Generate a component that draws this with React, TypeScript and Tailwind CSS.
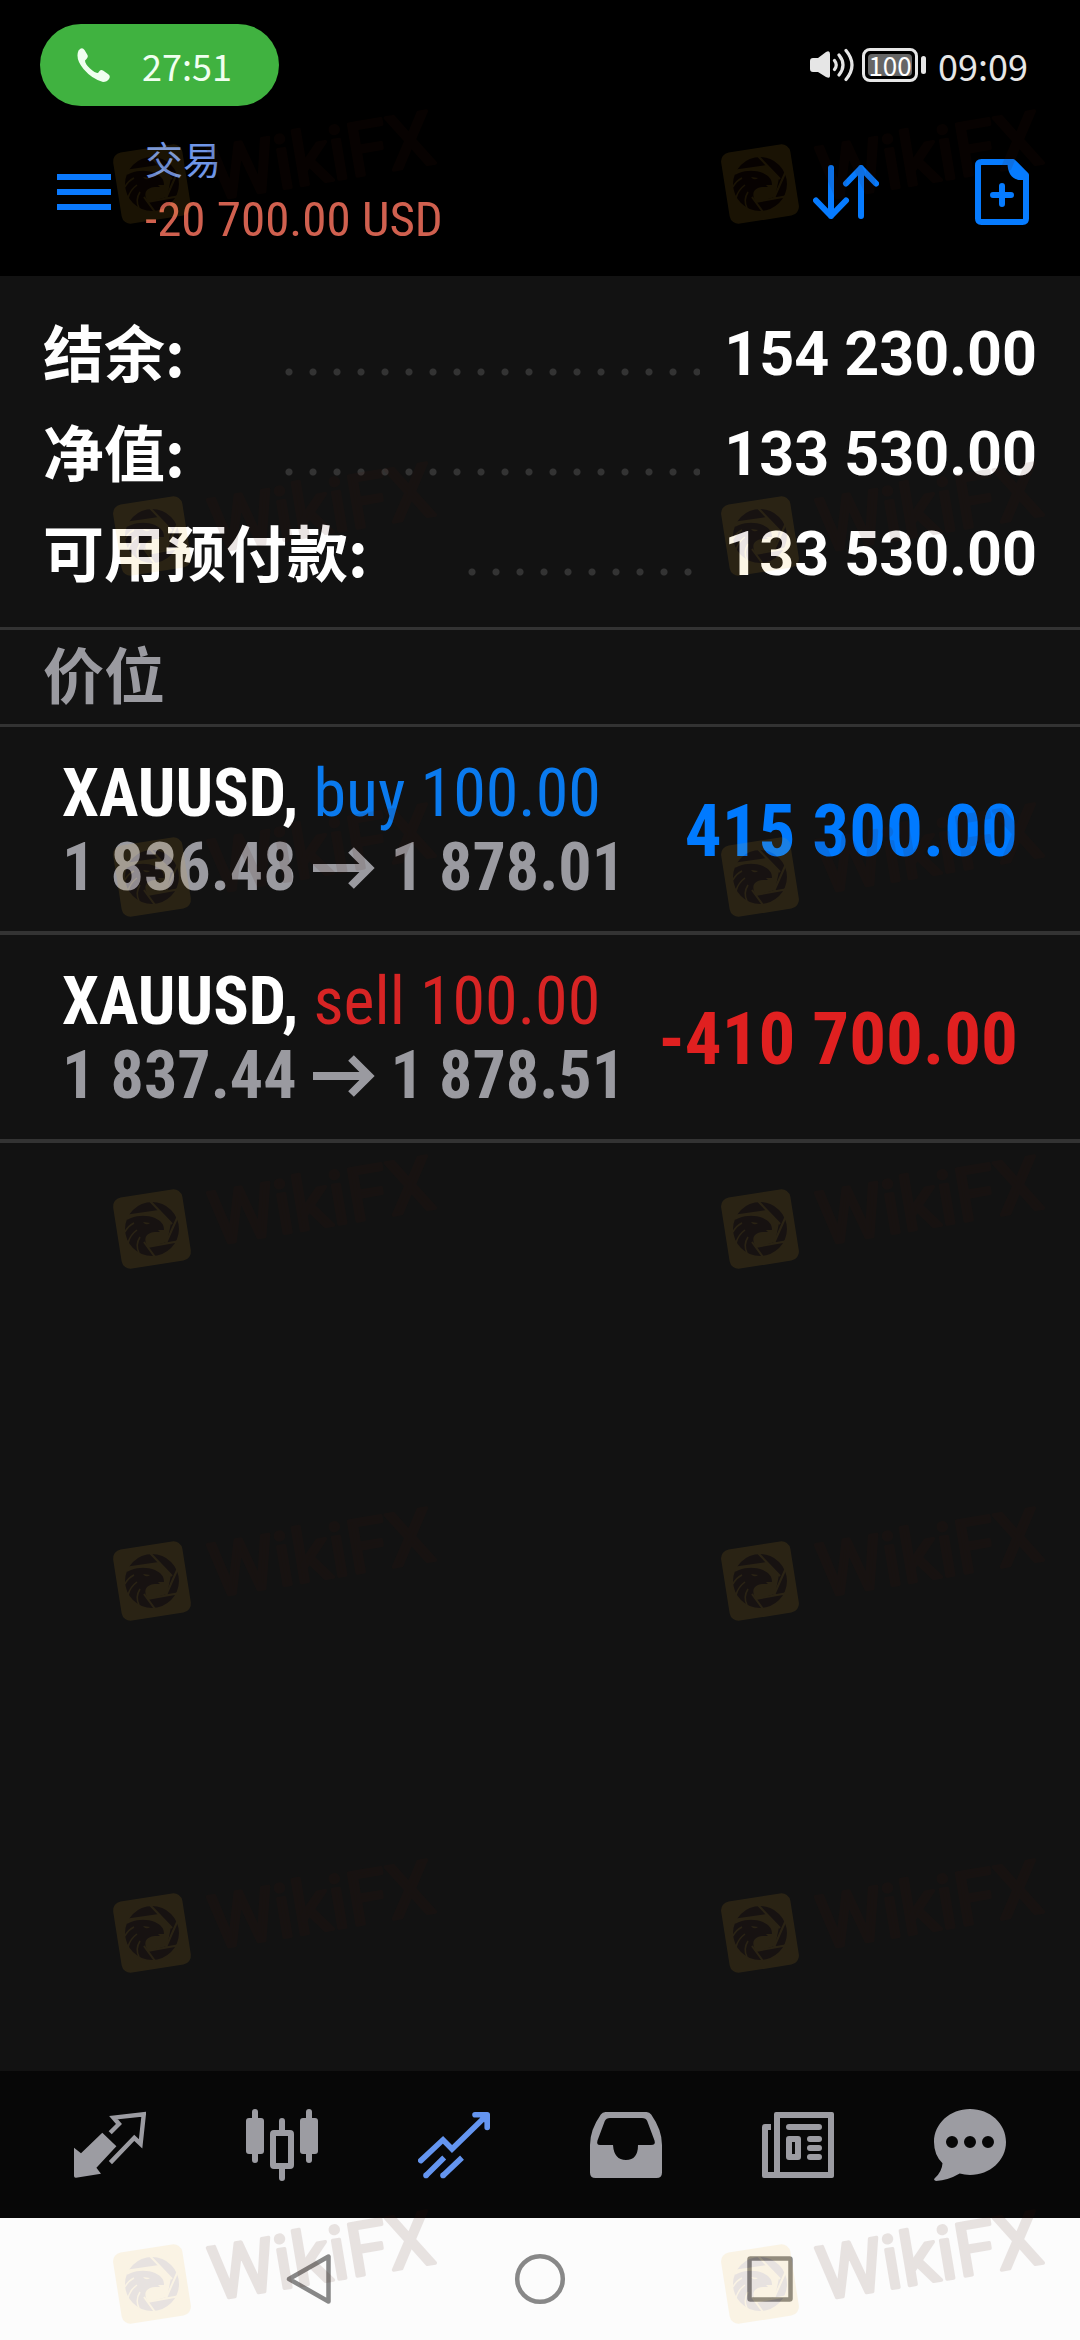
import { useState } from "react";
import clsx from "clsx";

type Position = {
  symbol: string;
  side: "buy" | "sell";
  volume: string;
  open: string;
  current: string;
  profit: string;
};

const summary = [
  { label: "结余:", value: "154 230.00" },
  { label: "净值:", value: "133 530.00" },
  { label: "可用预付款:", value: "133 530.00" },
];

const positions: Position[] = [
  { symbol: "XAUUSD", side: "buy", volume: "100.00", open: "1 836.48", current: "1 878.01", profit: "415 300.00" },
  { symbol: "XAUUSD", side: "sell", volume: "100.00", open: "1 837.44", current: "1 878.51", profit: "-410 700.00" },
];

const QuotesIcon = () => (
  <svg viewBox="0 0 72 72" className="size-[72px]" fill="currentColor">
    <path d="M0 38.7 7 44.3 28.3 23.7 42.4 37.2 22.4 58.7 27 64.7 2 68.8Q0 69 0 67Z" />
    <path d="M36.2 23.8 45 15 39.5 8.6 69.8 5.2 66.6 34.8 60.3 28.8 36.4 53.6" fill="none" stroke="currentColor" strokeWidth="4.4" />
  </svg>
);

const ChartIcon = () => (
  <svg viewBox="0 0 72 72" className="size-[72px]" fill="currentColor">
    <rect x="6" y="0" width="6" height="54" rx="3" />
    <rect x="0" y="9" width="18" height="36" rx="3" />
    <rect x="60" y="0" width="6" height="54" rx="3" />
    <rect x="54" y="9" width="18" height="36" rx="3" />
    <path d="M36 12V24M36 57V69" stroke="currentColor" strokeWidth="6" strokeLinecap="round" />
    <rect x="27" y="24" width="18" height="33" rx="1" fill="none" stroke="currentColor" strokeWidth="6" />
  </svg>
);

const TradeIcon = () => (
  <svg viewBox="0 0 72 72" className="size-[72px]" fill="none" stroke="currentColor" strokeWidth="5.6">
    <path d="M2.8 51.6 25 30.8 34 40 68.5 6.5" strokeLinecap="round" />
    <path d="M57 5.8H69.2V18.5" strokeLinecap="round" strokeLinejoin="round" />
    <path d="M60 6H69V16Z" fill="currentColor" stroke="none" />
    <path d="M8 66.6 26.2 48.6M25 66.6 44 48.6" />
    <circle cx="8" cy="66.4" r="2.8" fill="currentColor" stroke="none" />
    <circle cx="25" cy="66.4" r="2.8" fill="currentColor" stroke="none" />
  </svg>
);

const HistoryIcon = () => (
  <svg viewBox="0 0 72 72" className="size-[72px]" fill="currentColor">
    <path
      fillRule="evenodd"
      d="M15.5 3H56.5Q59.5 3 61.2 5.6 72 21 72 36V63.5Q72 69 66.5 69H5.5Q0 69 0 63.5V36Q0 21 10.8 5.6 12.5 3 15.5 3ZM20 9Q16.2 9 14.8 12L7.5 31.5Q6.2 36 10 36H23Q24 51 36 51T48 36H61Q66 36 64.5 31.5L57.2 12Q56 9 52 9Z"
    />
  </svg>
);

const NewsIcon = () => (
  <svg viewBox="0 0 72 72" className="size-[72px]" fill="currentColor">
    <path
      fillRule="evenodd"
      d="M12 5Q12 3 14 3H70Q72 3 72 5V67Q72 69 70 69H2Q0 69 0 67V18Q0 15 3 15H9V21H6V63H12ZM18 9V63H66V9Z"
    />
    <rect x="24" y="15" width="36" height="6" rx="3" />
    <path fillRule="evenodd" d="M27 27H36Q39 27 39 30V48Q39 51 36 51H27Q24 51 24 48V30Q24 27 27 27ZM30 33V45H33V33Z" />
    <rect x="45" y="27" width="15" height="6" rx="3" />
    <rect x="45" y="36" width="15" height="6" rx="3" />
    <rect x="45" y="45" width="15" height="6" rx="3" />
  </svg>
);

const ChatIcon = () => (
  <svg viewBox="0 0 72 72" className="size-[72px]" fill="currentColor">
    <path
      fillRule="evenodd"
      d="M36 0C56 0 72 14.5 72 33S56 66 36 66Q30.5 66 25.7 64.6 14 71.5 2 72 -.8 71.5.5 69.5 8 63 8.5 54.3 0 46 0 33C0 14.5 16 0 36 0ZM18 27a6 6 0 1 0 0 12a6 6 0 1 0 0-12ZM36 27a6 6 0 1 0 0 12a6 6 0 1 0 0-12ZM54 27a6 6 0 1 0 0 12a6 6 0 1 0 0-12Z"
    />
  </svg>
);

const tabs = [
  { id: "quotes", label: "行情", Icon: QuotesIcon },
  { id: "chart", label: "图表", Icon: ChartIcon },
  { id: "trade", label: "交易", Icon: TradeIcon },
  { id: "history", label: "历史", Icon: HistoryIcon },
  { id: "news", label: "新闻", Icon: NewsIcon },
  { id: "chat", label: "消息", Icon: ChatIcon },
];

function StatusBar() {
  return (
    <div className="flex h-[130px] items-center justify-between pl-10 pr-[52px] font-['Noto_Sans_CJK_SC','Noto_Sans',sans-serif] text-[36px] leading-none">
      <button className="flex h-[82px] w-[239px] items-center gap-8 rounded-full bg-[#40b240] pl-9 text-[#f0fff0]">
        <svg viewBox="0 0 34 34" className="size-[34px]" fill="currentColor">
          <path d="M2.5 2.5Q6-1.5 8.5 2L11.5 7Q12.5 9 10.5 11L9 12.5Q9 16 14 20.5T22 25L23.5 23Q25 21.5 27 22.5L32 26Q35 28 33 31 31 34 27 34 16 31 7.5 21T2.5 2.5Z" />
        </svg>
        <span>27:51</span>
      </button>
      <div className="flex items-center text-[#e6e6e6]">
        <svg viewBox="0 0 44 34" className="mr-2 h-[34px] w-[44px]" fill="none" stroke="currentColor" strokeWidth="3.2" strokeLinecap="round">
          <path d="M3 10H8L16 4Q20 2 20 6V28Q20 31 16 29L8 24H3Q0 24 0 21V13Q0 10 3 10Z" fill="currentColor" stroke="none" />
          <path d="M24.5 12.5Q28 17 24.5 21.5M29 7Q37 17 29 27M36 2.5Q48 17 36 31.5" />
        </svg>
        <div className="flex items-center gap-[3px]">
          <div className="flex h-[34px] w-[56px] items-center justify-center rounded-lg border-[3px] border-[#e6e6e6] p-[3px]">
            <span className="flex h-full w-full items-center justify-center rounded-sm bg-[#666] text-[26px] leading-none text-white">100</span>
          </div>
          <span className="h-[18px] w-[5px] rounded-full bg-[#e6e6e6]" />
        </div>
        <span className="ml-3">09:09</span>
      </div>
    </div>
  );
}

function Toolbar() {
  return (
    <header className="flex h-[146px] items-start pl-[57px] pr-[51px]">
      <button aria-label="菜单" className="mt-11 flex w-[54px] flex-col gap-[9px]">
        <span className="h-[6px] bg-[#0a7aff]" />
        <span className="h-[6px] bg-[#0a7aff]" />
        <span className="h-[6px] bg-[#0a7aff]" />
      </button>
      <div className="ml-[34px] flex-1">
        <h1 className="font-['Noto_Sans_CJK_SC',sans-serif] text-[38px] leading-[56px] text-[#6f96e8]">交易</h1>
        <p className="font-['Roboto_Condensed','Roboto',sans-serif] text-[49px] leading-[68px] text-[#d0604f]">-20 700.00 USD</p>
      </div>
      <button aria-label="排序" className="mt-[35px] text-[#067bff]">
        <svg viewBox="0 0 66 54" className="h-[54px] w-[66px]" fill="none" stroke="currentColor" strokeWidth="6" strokeLinecap="round" strokeLinejoin="round">
          <path d="M18 3V51M3 35.5 18 51 33 35.5M48 51V3M33 18.5 48 3 63 18.5" />
        </svg>
      </button>
      <button aria-label="新订单" className="ml-24 mt-[29px] text-[#067bff]">
        <svg viewBox="0 0 54 66" className="h-[66px] w-[54px]" fill="none" stroke="currentColor" strokeWidth="6" strokeLinejoin="round">
          <path d="M6.5 3H38L51 16V59.5Q51 63 47.5 63H6.5Q3 63 3 59.5V6.5Q3 3 6.5 3Z" />
          <path d="M32.5 4C32.5 14 37 21 46 21H51V16L38 3Z" fill="currentColor" stroke="none" />
          <path d="M27 27V45M18 36H36" strokeLinecap="round" />
        </svg>
      </button>
    </header>
  );
}

function PositionRow({ position }: { position: Position }) {
  const isBuy = position.side === "buy";

  return (
    <li className="flex h-[208px] items-center justify-between whitespace-nowrap border-b-4 border-[#333] px-[62px] pt-1 font-['Roboto_Condensed','Roboto',sans-serif]">
      <div>
        <p className="text-[66px] leading-[74px]">
          <span className="font-bold">{position.symbol},</span>{" "}
          <span className={isBuy ? "text-[#0a7aee]" : "text-[#d72424]"}>
            {position.side} {position.volume}
          </span>
        </p>
        <p className="flex items-center gap-4 text-[66px] font-bold leading-[74px] text-[#9a9aa0]">
          {position.open}
          <svg viewBox="0 0 62 42" className="h-[42px] w-[62px]" fill="none" stroke="currentColor" strokeWidth="8">
            <path d="M0 21H56M38 3 56 21 38 39" />
          </svg>
          {position.current}
        </p>
      </div>
      <span className={clsx("text-[73px] font-bold leading-none", isBuy ? "text-[#007aff]" : "text-[#e02020]")}>
        {position.profit}
      </span>
    </li>
  );
}

// One brand stamp, repeated over the whole screen.
function Stamp({ className }: { className: string }) {
  return (
    <svg viewBox="0 -30 360 160" className={clsx("absolute h-[160px] w-[360px] opacity-[0.11]", className)}>
      <g transform="translate(44 80)">
        <rect x="-35" y="-36" width="70" height="72" rx="9" fill="#ecb02a" transform="rotate(-9)" />
        <circle r="27" fill="#46180a" />
        <path
          d="M-24-14.5 7-19 19-6 15 13-4 18C-9 10-7 4 3 3L8 3 6 1 12 1C12-5 9-8 3-11-4-14-14-14-21-11-25-9-27-8-24-14.5Z"
          fill="#ecb02a"
        />
        <path d="M-2-28 20-5M26-13 14 14M28 12-5 18M-8 13 3 28" stroke="#ecb02a" strokeWidth="2" fill="none" />
        <path d="M-9-7Q-6-3-2-6Z" fill="#ecb02a" />
        <path d="M-27 3Q-24-3-18-6M-24 14Q-22 6-15 1M-13 24Q-17 16-12 8" stroke="#ecb02a" strokeWidth="1.5" fill="none" />
      </g>
      <text
        transform="translate(106 96) rotate(-9.5)"
        fill="#46180a"
        stroke="#46180a"
        strokeWidth="3.5"
        strokeLinejoin="round"
        className="font-['Roboto',sans-serif] text-[74px]"
      >
        WikiFX
      </text>
    </svg>
  );
}

const stampRows = ["top-[74px]", "top-[426px]", "top-[767px]", "top-[1119px]", "top-[1471px]", "top-[1823px]", "top-[2174px]"];

export default function App() {
  const [active, setActive] = useState("trade");

  return (
    <div className="relative flex min-h-screen flex-col overflow-hidden bg-[#121212] text-white">
      <div className="bg-black">
        <StatusBar />
        <Toolbar />
      </div>

      <main className="flex-1">
        <dl className="border-b-[3px] border-[#333] px-[43px] pb-[23px] pt-7">
          {summary.map((row) => (
            <div key={row.label} className="flex h-[100px] items-center">
              <dt className="pb-2 font-['Noto_Sans_CJK_SC',sans-serif] text-[61px] font-bold leading-none">{row.label}</dt>
              <span className="ml-[100px] mr-6 mt-9 h-2 flex-1 bg-[radial-gradient(circle_at_4px_4px,#333_3px,transparent_4px)] bg-[length:24px_8px] bg-repeat-x" />
              <dd className="font-['Roboto',sans-serif] text-[61px] font-bold leading-none">{row.value}</dd>
            </div>
          ))}
        </dl>

        <h2 className="border-b-[3px] border-[#333] px-[43px] pb-2 font-['Noto_Sans_CJK_SC',sans-serif] text-[61px] font-bold leading-[86px] text-[#9a9aa0]">
          价位
        </h2>

        <ul>
          {positions.map((position) => (
            <PositionRow key={position.side} position={position} />
          ))}
        </ul>
      </main>

      <nav className="grid h-[147px] grid-cols-6 bg-[#070707] px-6">
        {tabs.map(({ id, label, Icon }) => (
          <button
            key={id}
            aria-label={label}
            onClick={() => setActive(id)}
            className={clsx("flex items-center justify-center", active === id ? "text-[#6495f0]" : "text-[#9c9ca2]")}
          >
            <Icon />
          </button>
        ))}
      </nav>

      <div className="flex h-[122px] items-center justify-center gap-[178px] bg-[#fcfcfc] text-[#888]">
        <button aria-label="返回">
          <svg viewBox="0 0 52 52" className="size-[52px]" fill="none" stroke="currentColor" strokeWidth="4.5" strokeLinejoin="round">
            <path d="M44.5 3.5V48.5L5 26Z" />
          </svg>
        </button>
        <button aria-label="主屏幕">
          <svg viewBox="0 0 52 52" className="size-[52px]" fill="none" stroke="currentColor" strokeWidth="4.5">
            <circle cx="26" cy="26" r="22.8" />
          </svg>
        </button>
        <button aria-label="最近任务">
          <svg viewBox="0 0 52 52" className="size-[52px]" fill="none" stroke="currentColor" strokeWidth="4.5" strokeLinejoin="round">
            <rect x="5.5" y="5.5" width="41" height="41" rx="1" />
          </svg>
        </button>
      </div>

      <div aria-hidden="true" className="pointer-events-none absolute inset-0">
        {stampRows.map((top) => (
          <div key={top}>
            <Stamp className={clsx("left-[108px]", top)} />
            <Stamp className={clsx("left-[716px]", top)} />
          </div>
        ))}
      </div>
    </div>
  );
}
